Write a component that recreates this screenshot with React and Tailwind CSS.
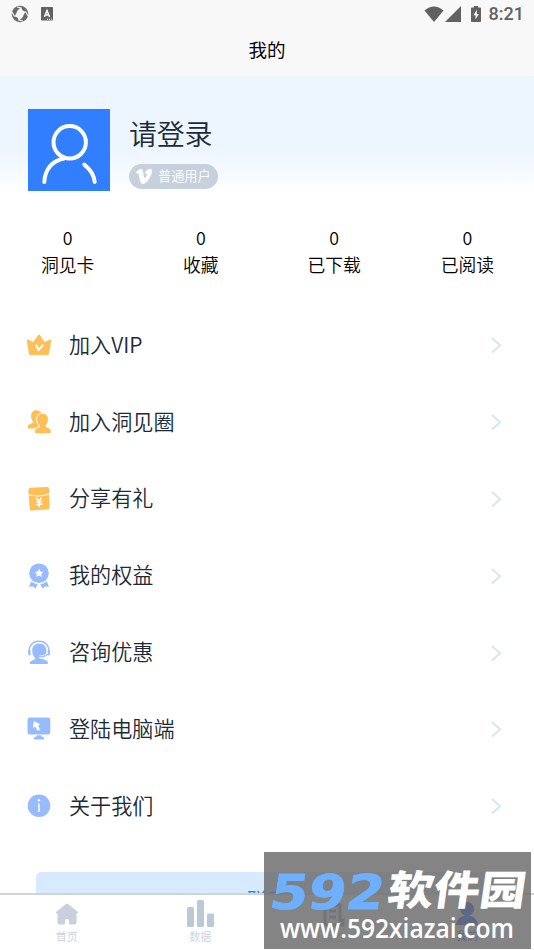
import React from "react";

const STATS = [
  { label: "洞见卡", value: 0 },
  { label: "收藏", value: 0 },
  { label: "已下载", value: 0 },
  { label: "已阅读", value: 0 },
];

function CrownIcon() {
  return (
    <svg className="w-[26px] h-[26px]" viewBox="0 0 26 26">
      <path
        d="M3.200 22.200 L0.700 8.600 Q0.600 7.100 1.900 7.600 L7.300 9.900 L12 3.200 Q13 2 14 3.200 L18.700 9.900 L24.100 7.600 Q25.400 7.100 25.300 8.600 L22.800 22.200 Q22.600 22.900 21.800 22.900 H4.200 Q3.400 22.900 3.200 22.200Z"
        fill="#ffbf57"
      />
      <path d="M10.400 13.300 L12.400 18.200 L16.600 13.300" fill="none" stroke="#fff" strokeWidth="2" strokeLinecap="round" strokeLinejoin="round" />
    </svg>
  );
}

function GroupIcon() {
  return (
    <svg className="w-[26px] h-[26px]" viewBox="0 0 26 26" fill="#ffbf57">
      <path d="M10.500 1.300c3.400 0 5.400 2.200 5.400 5.600 0 3-1.100 5-2.600 6.100v1.400l-2 5.200H3C1.600 19.600 1.500 18.200 1.800 17.200c.4-1.700 3-2.500 4.600-3.300.8-.4.9-1 .4-1.700C5.700 10.900 5.100 9.100 5.100 6.900c0-3.400 2-5.600 5.400-5.600z" />
      <path
        d="M16.400 4.300c3.800 0 6 2.500 6 6.100 0 2.600-1 4.700-2.500 5.800-.4.700-.1 1.200.6 1.600 1.600.8 4 1.300 4.500 3.500.3 1.700-.1 3.500-1.300 3.500H10.200c-1.500 0-1.900-1.700-1.600-3.200.4-2.100 2.700-2.700 4.200-3.700.8-.5.8-1.100.3-1.700-1.500-1.200-2.600-3.300-2.600-5.800 0-3.600 2.200-6.100 5.900-6.100z"
        stroke="#fff"
        strokeWidth="0.900"
      />
    </svg>
  );
}

function GiftIcon() {
  return (
    <svg className="w-[26px] h-[26px]" viewBox="0 0 26 26">
      <path d="M4.200 1.800 L21.400 1 Q23.200 1 23.200 2.800 L23.300 7.500 Q13 11.300 2.400 8.200 L2.500 3.700 Q2.600 2 4.200 1.800Z" fill="#ffbf57" />
      <path d="M2.800 9.200 Q13 12.300 23.200 8.500 L23.500 21.700 Q23.500 23.500 21.700 23.600 L5.600 24.600 Q3.800 24.700 3.700 22.900Z" fill="#ffbf57" />
      <path d="M10.300 12 L13 15.400 L15.500 11.700 M13 15.400 L13.200 20.900 M10 15.900 L16.200 15.500 M10.200 18.400 L16.400 18" fill="none" stroke="#fff" strokeWidth="1.500" />
    </svg>
  );
}

function MedalIcon() {
  return (
    <svg className="w-[26px] h-[26px]" viewBox="0 0 26 26" fill="#98bbff">
      <circle cx="13" cy="10.200" r="9.800" />
      <path d="M13 5.800 L14.400 8.600 L17.300 9 L15.200 11.100 L15.700 14 L13 12.600 L10.300 14 L10.800 11.100 L8.700 9 L11.600 8.600Z" fill="#fff" />
      <path d="M5.200 18.600 Q8.300 20.900 11.800 21.400 L9.200 25.800 L7.200 23.500 L3 23.700Z" />
      <path d="M20.800 18.600 Q17.700 20.900 14.200 21.400 L16.800 25.800 L18.800 23.500 L23 23.700Z" />
    </svg>
  );
}

function ServiceIcon() {
  return (
    <svg className="w-[26px] h-[26px]" viewBox="0 0 26 26" fill="#98bbff">
      <path d="M3.200 14 C2 5.500 7 1.300 13 1.300 C19 1.300 24 5.500 22.900 14" fill="none" stroke="#98bbff" strokeWidth="1.500" />
      <path d="M2.300 10 h2.200 v5.500 h-1 Q2.300 15.500 2.300 14z M21.700 10 h2.200 v4 q0 1.500-1.200 1.500h-1z" />
      <path d="M13.300 3.600c4.600 0 7 3.200 7 6.900 0 2.300-.6 4.300-1.800 5.700h-4.100l-1.600 1.500 1.500 1 3 .3c1.400 1.400 4.600 1.300 4.700 4 0 .8-.5 1.100-1.200 1.100H4.800c-.8 0-1.200-.4-1.100-1.200.5-2.600 4-2.700 5.300-3.700.6-.5.400-1.100-.1-1.600C7.100 16 6.200 13.500 6.200 10.500c0-3.700 2.500-6.900 7.100-6.900z" />
      <path d="M13.500 16.600 Q17.500 17.500 22 14.600" fill="none" stroke="#fff" strokeWidth="2.600" />
      <path d="M13.600 16.600 Q17.500 17.500 22.500 14" fill="none" stroke="#98bbff" strokeWidth="1.200" strokeLinecap="round" />
    </svg>
  );
}

function ComputerIcon() {
  return (
    <svg className="w-[26px] h-[26px]" viewBox="0 0 26 26" fill="#98bbff">
      <rect x="1.500" y="1.500" width="22.800" height="17" rx="2.500" />
      <path d="M8 21.600 Q10.500 21.300 11.200 19.300 H14.800 Q15.500 21.300 18 21.600 Q19 23.400 17.500 23.400 H8.500 Q7 23.400 8 21.600Z" />
      <path d="M7.800 5 L14 8.300 L12.200 9.500 L14 14 L11.200 14.500 L9.600 10.700 L7 12Z" fill="#fff" />
    </svg>
  );
}

function InfoIcon() {
  return (
    <svg className="w-[26px] h-[26px]" viewBox="0 0 26 26">
      <circle cx="13" cy="12.800" r="11.300" fill="#98bbff" />
      <circle cx="12.900" cy="7.300" r="1.200" fill="#fff" />
      <path d="M12.900 10.500 V19" stroke="#fff" strokeWidth="1.500" />
    </svg>
  );
}

const MENU = [
  { label: "加入VIP", icon: CrownIcon },
  { label: "加入洞见圈", icon: GroupIcon },
  { label: "分享有礼", icon: GiftIcon },
  { label: "我的权益", icon: MedalIcon },
  { label: "咨询优惠", icon: ServiceIcon },
  { label: "登陆电脑端", icon: ComputerIcon },
  { label: "关于我们", icon: InfoIcon },
];

function StatusBar() {
  return (
    <div className="h-[27px] flex items-center justify-between pl-[11px] pr-[10px] text-[#616161]">
      <div className="flex items-center gap-3">
        <svg className="w-[18px] h-[18px]" viewBox="0 0 18 18">
          <circle cx="9" cy="9" r="8.300" fill="#6a6a6a" />
          <path d="M10.500 2.500 Q10.500 6 14.500 6.500 L12.800 9.500 Q11.500 14 7.500 15.500 Q7.500 12 3.500 11.500 L5.200 8.500 Q6.500 4 10.500 2.500Z" fill="#f8f8f8" />
          <path d="M10.500 3 L6 2 M14.500 6.500 L17 11 M7.500 15 L12 16 M3.500 11.500 L1 7" fill="none" stroke="#f8f8f8" strokeWidth="1.200" />
        </svg>
        <svg className="w-3 h-[14px]" viewBox="0 0 12 14">
          <rect width="12" height="13.500" rx="1" fill="#616161" />
          <path d="M3.400 10 L6 3.500 L8.600 10 M4.400 8 H7.600" fill="none" stroke="#fff" strokeWidth="1.500" />
          <path d="M6 12.200 H11" stroke="#fff" strokeWidth="1" strokeDasharray="1 1" />
        </svg>
      </div>
      <div className="flex items-center">
        <svg className="w-5 h-4" viewBox="0 0 20 16" fill="#616161">
          <path d="M0.500 4.500 Q10 -3.300 19.500 4.500 L10 16Z" />
        </svg>
        <svg className="w-4 h-4 ml-[1px]" viewBox="0 0 16 16" fill="#616161">
          <path d="M16 0 V16 H0Z" />
        </svg>
        <svg className="w-[10px] h-4 ml-[10px]" viewBox="0 0 10 16">
          <path d="M3 0 H7 V1.500 H9 Q10 1.500 10 2.500 V15 Q10 16 9 16 H1 Q0 16 0 15 V2.500 Q0 1.500 1 1.500 H3Z" fill="#616161" />
          <path d="M6 3.800 L2.300 9.300 H4.500 V13.600 L7.900 8 H5.800Z" fill="#f8f8f8" />
        </svg>
        <span className="ml-[8px] pt-px font-['Roboto'] font-medium text-[18px] leading-none">8:21</span>
      </div>
    </div>
  );
}

function Profile() {
  return (
    <div className="h-[119px] pt-[33px] pl-[28px] flex bg-linear-to-b from-[#edf5ff] from-60% to-white">
      <div className="w-[82px] h-[82px] bg-[#317eff]">
        <svg className="w-[82px] h-[82px]" viewBox="0 0 82 82" fill="none" stroke="#fff" strokeWidth="4">
          <circle cx="41.700" cy="33.300" r="16.200" />
          <path d="M16.300 73 C17 60 24.500 51.500 36 49.500 M56.300 55.600 C62.500 60.500 66 66 66.700 73" strokeLinecap="round" />
        </svg>
      </div>
      <div className="ml-[19px] flex flex-col items-start">
        <div className="h-[55px] leading-[49px] text-[28px] text-[#202a36] tracking-[-0.300px]">请登录</div>
        <div className="w-[89px] h-[25px] rounded-full bg-[#c7d1dd] flex items-center pl-[6px] text-white">
          <svg className="w-[18px] h-[18px]" viewBox="0 0 24 24" fill="currentColor">
            <path d="M1 5.500 C3.500 3.300 6 1 8 1 C12 1 10.900 13.300 13 13.300 C14.300 13.300 16.200 9.500 15.800 8 C15.400 7 14 7.500 13.200 7.900 C14 3.500 17 0.500 20.500 1 C25.500 2 20.500 14 15.200 19 C10.500 23.400 7.800 21 6.600 16.500 C5.500 12.500 5 6.800 3.500 6.800 L2 7.500Z" />
          </svg>
          <span className="ml-[5px] -mt-px text-[13.200px] leading-none">普通用户</span>
        </div>
      </div>
    </div>
  );
}

function Watermark() {
  return (
    <div className="absolute left-[264px] top-[852px] w-[267px] h-[97px] bg-[#6f6f6f]/85">
      <svg className="w-[267px] h-[97px]" viewBox="0 0 267 97">
        <g transform="translate(4 56.500) skewX(-9)">
          <text x="0" y="0" fontSize="48" fontWeight="700" fontFamily="'DejaVu Sans', sans-serif" textLength="114" lengthAdjust="spacingAndGlyphs" fill="#6eb0ff" stroke="#6eb0ff" strokeWidth="0.800">592</text>
        </g>
        <g transform="translate(122 53) skewX(-8)">
          <text x="0" y="0" fontSize="41" fontWeight="900" fontFamily="'Noto Sans CJK SC', sans-serif" textLength="138" lengthAdjust="spacingAndGlyphs" fill="#fff">软件园</text>
        </g>
        <text x="16" y="86" fontSize="27" fontWeight="600" fontFamily="'Open Sans', sans-serif" textLength="234" lengthAdjust="spacingAndGlyphs" fill="#fff">www.592xiazai.com</text>
      </svg>
    </div>
  );
}

function TabBar() {
  return (
    <div className="h-[57px] shrink-0 bg-white border-t-2 border-[#d1d4d6] grid grid-cols-4 text-[11px] leading-none text-[#c7d1dd]">
      <div className="flex flex-col items-center pt-[8px]">
        <svg className="w-6 h-[22px]" viewBox="0 0 24 22" fill="#c7d1dd">
          <path d="M11 1 Q12 0.300 13 1 L23 9 Q23.500 10.600 21.500 10.500 V19.500 Q21.500 21.500 19.500 21.500 H15 Q14 21.500 14 20.500 V17 Q14 15.900 12 15.900 Q10 15.900 10 17 V20.500 Q10 21.500 9 21.500 H4.500 Q2.500 21.500 2.500 19.500 V10.500 Q0.500 10.600 1 9Z" />
        </svg>
        <span className="mt-[6px]">首页</span>
      </div>
      <div className="flex flex-col items-center pt-[5px]">
        <svg className="w-[27px] h-[27px]" viewBox="0 0 27 27" fill="#bbc8d5">
          <rect x="0" y="7" width="7" height="20" rx="1.500" />
          <rect x="10" y="0" width="7" height="27" rx="1.500" />
          <rect x="20" y="13.500" width="7" height="13.500" rx="1.500" />
        </svg>
        <span className="mt-[4px]">数据</span>
      </div>
      <div className="flex flex-col items-center pt-[8px]">
        <svg className="w-[22px] h-[24px]" viewBox="0 0 22 24" fill="none" stroke="#8298ad" strokeWidth="3">
          <path d="M2 2 H17 V17 H20 V22 H2Z M6 8 H13 M6 14 H13" />
        </svg>
        <span className="mt-[4px]">报告</span>
      </div>
      <div className="flex flex-col items-center pt-[7px] text-[#003fff]">
        <svg className="w-[22px] h-[24px]" viewBox="0 0 22 24" fill="#003fff">
          <circle cx="11" cy="7" r="7" />
          <path d="M7 14 H15 Q21 16 22 23 H0 Q1 16 7 14Z" />
        </svg>
        <span className="mt-[4px]">我的</span>
      </div>
    </div>
  );
}

function App() {
  return (
    <div className="relative w-[534px] h-[950px] overflow-hidden bg-white flex flex-col font-['Noto_Sans_CJK_SC',sans-serif] font-[350]">
      {/* Header */}
      <header className="h-[76px] shrink-0 bg-[#f8f8f8]">
        <StatusBar />
        <h1 className="h-[49px] leading-[45px] text-center text-[18.500px] font-normal text-black">我的</h1>
      </header>

      <main className="flex-1 min-h-0 overflow-hidden">
        <Profile />

        {/* Counters */}
        <div className="h-[112px] pt-[29px] pl-px grid grid-cols-4 text-center text-[17.800px] leading-[27px] text-black">
          {STATS.map((s) => (
            <div key={s.label}>
              <div>{s.value}</div>
              <div>{s.label}</div>
            </div>
          ))}
        </div>

        {/* Menu */}
        <ul>
          {MENU.map(({ label, icon: Icon }) => (
            <li key={label} className="h-[76.800px] flex items-center pl-[26px] pr-[32px]">
              <Icon />
              <span className="ml-[17px] pb-[2px] flex-1 text-[21.100px] leading-none text-[#202a36]">{label}</span>
              <svg className="w-3 h-[18px]" viewBox="0 0 12 18" fill="none" stroke="#dfe5ec" strokeWidth="2.200">
                <path d="M2 2 L10 9.300 L2 16.500" />
              </svg>
            </li>
          ))}
        </ul>

        <button className="block mt-[27px] mx-[36px] w-[462px] h-[60px] pb-1 rounded-[5px] bg-[#d8eaff] text-[20px] text-[#317eff]">
          联系
        </button>
      </main>

      <TabBar />
      <Watermark />
    </div>
  );
}

export default App;
